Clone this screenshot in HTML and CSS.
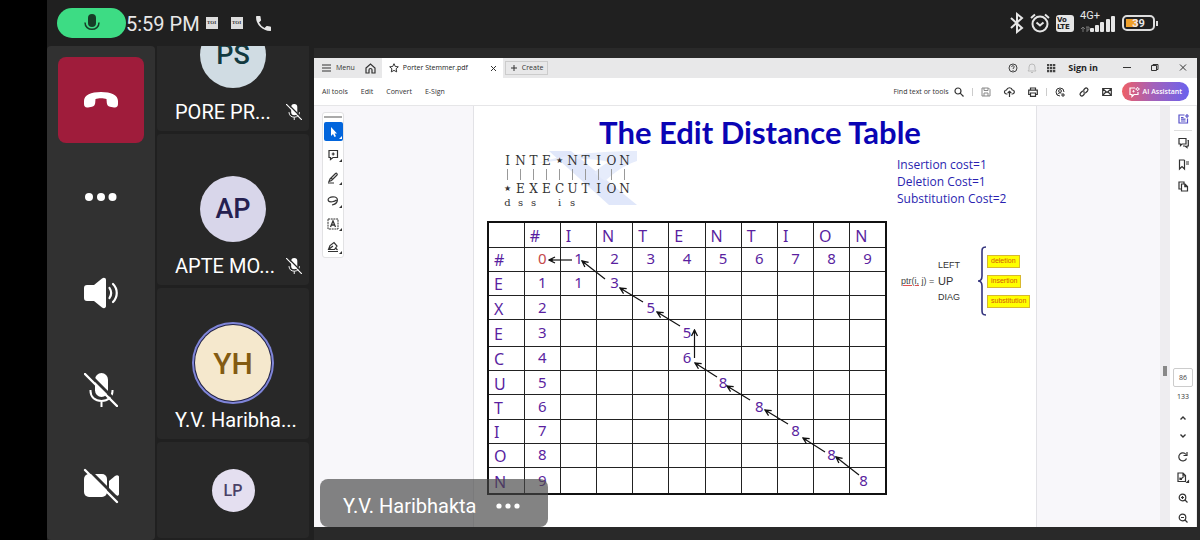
FILE: index.html
```html
<!DOCTYPE html>
<html lang="en">
<head>
<meta charset="utf-8">
<title>Meeting</title>
<link rel="stylesheet" href="styles.css">
</head>
<body>
<svg class="defs" aria-hidden="true">
  <symbol id="mic-off" viewBox="0 0 34 34"><rect x="11" y="0" width="13" height="24" rx="6.5" fill="currentColor"/><path d="M6.500 17v1c0 6 4.500 10 11 10s11-4 11-10v-1M17.500 28v6" fill="none" stroke="currentColor" stroke-width="2"/><path d="M3 -1L37 33" stroke="var(--cut)" stroke-width="3"/><path d="M1 1L33 33" stroke="currentColor" stroke-width="2.400" stroke-linecap="round"/></symbol>
  <symbol id="corner" viewBox="0 0 4 4"><path d="M4 0v4H0z" fill="currentColor"/></symbol>
  <marker id="tip" viewBox="0 0 8 8" refX="7" refY="4" markerWidth="8" markerHeight="8" markerUnits="userSpaceOnUse" orient="auto"><path d="M1 1l6 3-6 3M3 4h4" fill="none" stroke="#111" stroke-width="1.300"/></marker>
</svg>

<header class="status">
  <span class="mic-pill"><svg width="16" height="18" viewBox="0 0 16 18"><rect x="4" y="0" width="8" height="13" rx="4" fill="#173d27"/><path d="M1 8.500c0 9 14 9 14 0" fill="none" stroke="#173d27" stroke-width="1.500"/></svg></span>
  <time>5:59 PM</time>
  <span class="toi">TOI</span>
  <span class="toi">TOI</span>
  <svg class="call" width="15" height="15" viewBox="3 3 18 18"><path fill="#e6e6e6" d="M6.620 10.790a15.150 15.150 0 0 0 6.590 6.590l2.200-2.200c.28-.28.67-.36 1.020-.25 1.120.37 2.320.57 3.570.57a1 1 0 0 1 1 1V20a1 1 0 0 1-1 1A17 17 0 0 1 3 4a1 1 0 0 1 1-1h3.500a1 1 0 0 1 1 1c0 1.250.2 2.450.57 3.570.11.35.03.74-.25 1.020z"/></svg>
  <div class="phone">
    <svg width="14" height="20" viewBox="0 0 14 20"><path d="M1 5l11 10-5 4V1l5 4L1 15" fill="none" stroke="#e6e6e6" stroke-width="2"/></svg>
    <svg width="20" height="20" viewBox="0 0 20 20" fill="none" stroke="#e6e6e6" stroke-width="2"><circle cx="10" cy="11" r="7.500"/><path d="M6.500 9.500l3.500 3 3.500-3M1 5l4-3.500M19 5l-4-3.500"/></svg>
    <span class="volte">Vo<br>LTE</span>
    <span class="net"><span class="gen">4G+</span><svg width="36" height="20" viewBox="0 0 36 20"><path d="M3 19v-5m-2 2l2-2 2 2M7 14v5m-1-5h3v3H7" stroke="#777" fill="none"/><g fill="#e6e6e6"><rect x="10" y="15" width="4" height="4" rx="1"/><rect x="15" y="12" width="4" height="7" rx="1"/><rect x="20" y="9" width="4" height="10" rx="1"/><rect x="26" y="6" width="4" height="13" rx="1"/><rect x="31" y="3" width="4" height="16" rx="1"/></g></svg></span>
    <span class="battery">39</span>
  </div>
</header>

<main class="meeting">
  <nav class="controls" aria-label="Call controls">
    <button class="ctl end" aria-label="Hang up"><svg width="34" height="16" viewBox="0 0 34 16"><path fill="#fff" d="M17 0C7 0 0 3 0 9v3c0 2.500 1.500 4 4 3.500l4-.8c2-.4 3-1.700 3.200-3.700L11.500 7c3-1 8-1 11 0l.3 4c.2 2 1.200 3.300 3.200 3.700l4 .8c2.500.5 4-1 4-3.500V9c0-6-7-9-17-9z"/></svg></button>
    <button class="ctl" aria-label="More"><svg width="32" height="8" viewBox="0 0 32 8" fill="#fff"><circle cx="4" cy="4" r="4"/><circle cx="16" cy="4" r="4"/><circle cx="27.500" cy="4" r="4"/></svg></button>
    <button class="ctl" aria-label="Speaker"><svg width="34" height="30" viewBox="0 0 34 30"><path fill="#fff" d="M0 10a3 3 0 0 1 3-3h7l8-6.500c2-1.500 4-.5 4 1.500v26c0 2-2 3-4 1.500L10 23H3a3 3 0 0 1-3-3z"/><path d="M25.500 10c2 3 2 7 0 10M29 6c5 5 5 13 0 18" fill="none" stroke="#fff" stroke-width="2.200" stroke-linecap="round"/></svg></button>
    <button class="ctl" aria-label="Unmute"><svg width="34" height="34"><use href="#mic-off"/></svg></button>
    <button class="ctl" aria-label="Turn camera on"><svg width="35" height="34" viewBox="0 0 35 34"><rect y="5" width="23" height="23" rx="5" fill="#fff"/><path d="M25 12l6-5c2-1.500 4-.7 4 1v17c0 1.700-2 2.500-4 1l-6-5z" fill="#fff"/><path d="M3-1l34 34" stroke="#313131" stroke-width="3"/><path d="M1 1l32 32" stroke="#fff" stroke-width="2.400" stroke-linecap="round"/></svg></button>
  </nav>

  <section class="people" aria-label="Participants">
    <article class="person first"><div class="face"><span class="avatar ps">PS</span></div><div class="name"><span>PORE PR...</span><svg width="16" height="16"><use href="#mic-off"/></svg></div></article>
    <article class="person"><div class="face"><span class="avatar ap">AP</span></div><div class="name"><span>APTE MO...</span><svg width="16" height="16"><use href="#mic-off"/></svg></div></article>
    <article class="person"><div class="face"><span class="avatar yh">YH</span></div><div class="name"><span>Y.V. Haribha...</span></div></article>
    <article class="person last"><span class="avatar lp">LP</span></article>
  </section>

  <section class="stage">
    <div class="window">
      <div class="titlebar">
        <button class="menu"><svg width="9" height="8" viewBox="0 0 9 8"><path d="M0 1h9M0 4h9M0 7h9" stroke="#333"/></svg>Menu</button>
        <button class="home" aria-label="Home"><svg width="11" height="11" viewBox="0 0 11 11" fill="none" stroke="#333" stroke-width="1.200"><path d="M1 5l4.500-4L10 5v5H7V7a1.500 1.500 0 0 0-3 0v3H1z"/></svg></button>
        <div class="tab"><svg width="10" height="10" viewBox="0 0 10 10"><path d="M5 .7l1.300 2.800 3 .3-2.200 2 .6 3.100L5 7.400 2.300 8.900l.6-3.100-2.200-2 3-.3z" fill="none" stroke="#333"/></svg><span>Porter Stemmer.pdf</span><button class="x" aria-label="Close tab"><svg width="5" height="5" viewBox="0 0 5 5"><path d="M0 0l5 5M5 0L0 5" stroke="#333"/></svg></button></div>
        <button class="create"><svg width="6" height="6" viewBox="0 0 6 6"><path d="M0 3h6M3 0v6" stroke="#333"/></svg>Create</button>
        <div class="tray">
          <svg width="10" height="10" viewBox="0 0 10 10" fill="none" stroke="#444"><circle cx="5" cy="5" r="4"/><path d="M3.700 4c0-2 2.700-1.600 2.500 0C6 5 5 5 5 6M5 7v1"/></svg>
          <svg width="10" height="10" viewBox="0 0 10 10" fill="none" stroke="#bbb"><path d="M1 8h8L8 6.500V4a3 3 0 0 0-6 0v2.500zM4 9.500h2"/></svg>
          <svg width="10" height="10" viewBox="0 0 10 10" fill="#444"><path d="M1 1h2.300v2.300H1zM4 1h2.300v2.300H4zM7 1h2.300v2.300H7zM1 4h2.300v2.300H1zM4 4h2.300v2.300H4zM7 4h2.300v2.300H7zM1 7h2.300v2.300H1zM4 7h2.300v2.300H4zM7 7h2.300v2.300H7z"/></svg>
          <button class="signin">Sign in</button>
          <div class="winbtns">
            <button aria-label="Minimize"><svg width="10" height="10" viewBox="0 0 10 10"><path d="M1 4.500h8" stroke="#333"/></svg></button>
            <button aria-label="Restore"><svg width="10" height="10" viewBox="0 0 10 10" fill="none" stroke="#333"><path d="M1.500 2.500h5v5h-5zM3 2.500v-1h5v5H6.500"/></svg></button>
            <button aria-label="Close"><svg width="10" height="10" viewBox="0 0 10 10"><path d="M2 1.500l6 6M8 1.500l-6 6" stroke="#333"/></svg></button>
          </div>
        </div>
      </div>

      <div class="toolbar">
        <button>All tools</button><button>Edit</button><button>Convert</button><button>E-Sign</button>
        <div class="actions">
          <button class="find">Find text or tools<svg width="10" height="10" viewBox="0 0 10 10" fill="none" stroke="#333" stroke-width="1.200"><circle cx="4" cy="4" r="3"/><path d="M6.200 6.200L9.500 9.500"/></svg></button>
          <i class="sep"></i>
          <button aria-label="Save"><svg width="10" height="10" viewBox="0 0 10 10" fill="none" stroke="#888"><path d="M1 1h6.500L9 2.500V9H1zM3 1v2.500h4V1M3 9V6h4v3"/></svg></button>
          <button aria-label="Upload"><svg width="11" height="10" viewBox="0 0 11 10" fill="none" stroke="#333" stroke-width="1.200"><path d="M3.500 7H2.500a2 2 0 0 1 0-4C3.500 0 7.500 0 8.300 3a2 2 0 0 1 0 4H7.500M5.500 10V4.500M3.700 6l1.800-1.700L7.300 6"/></svg></button>
          <button aria-label="Print"><svg width="10" height="10" viewBox="0 0 10 10" fill="none" stroke="#333" stroke-width="1.200"><path d="M2.500 3V1h5v2M2 7.500H.7V3.200h8.600v4.300H8M2.500 6h5v3.300h-5z"/></svg></button>
          <i class="sep"></i>
          <button aria-label="Add person"><svg width="11" height="10" viewBox="0 0 11 10" fill="none" stroke="#333"><path d="M5 9A4 4 0 1 1 9 5M8 6v4M6 8h4"/><circle cx="5" cy="4" r="1.400"/><path d="M2.500 7.500C3 6 5 5.500 6.500 6.200"/></svg></button>
          <button aria-label="Link"><svg width="10" height="10" viewBox="0 0 10 10" fill="none" stroke="#333" stroke-width="1.200"><path d="M4.500 3L6 1.500C7.500 0 10 2.300 8.500 4L7 5.500C6 6.300 5 6 4.500 5.500M5.500 7L4 8.500C2.500 10 0 7.700 1.500 6L3 4.500C4 3.700 5 4 5.500 4.500"/></svg></button>
          <button aria-label="Mail"><svg width="10" height="10" viewBox="0 0 10 10" fill="none" stroke="#333" stroke-width="1.200"><path d="M.7 1.500h8.600v7H.7zM1 2l4 3.500L9 2M1 8.200L3.800 5M9 8.200L6.200 5"/></svg></button>
          <button class="ai"><svg width="11" height="10" viewBox="0 0 11 10" fill="none" stroke="#fff" stroke-width="1.200"><path d="M6 1H1v6.500h2V9.500l2-2h4V5"/><path d="M8.500 0l.6 1.500L10.500 2l-1.400.6-.6 1.400L8 2.600 6.500 2 8 1.500zM4.500 3v2.500M3.300 4.300h2.500" stroke-width=".8"/></svg>AI Assistant</button>
        </div>
      </div>

      <div class="workspace">
        <div class="gutter left">
          <div class="toolbox">
            <i class="grip"></i>
            <button class="on" aria-label="Select"><svg width="14" height="14" viewBox="0 0 14 14"><path d="M5 2v9l2-2 1.500 3L10 11.300 8.600 8.500H11z" fill="#fff"/></svg><svg class="more" width="3" height="3"><use href="#corner"/></svg></button>
            <button aria-label="Comment"><svg width="12" height="12" viewBox="0 0 12 12" fill="none" stroke="#333" stroke-width="1.200"><path d="M2 1.500h8.500v7H6l-2.500 2v-2H2zM6.200 3.500v3M4.700 5h3"/></svg><svg class="more" width="3" height="3"><use href="#corner"/></svg></button>
            <button aria-label="Draw"><svg width="12" height="12" viewBox="0 0 12 12" fill="none" stroke="#333" stroke-width="1.200"><path d="M3 7l5.500-5.500c1-.8 2.300.7 1.500 1.500L4.500 8.500 2 9.500zM4 5.800l2 2M1 11h6"/></svg><svg class="more" width="3" height="3"><use href="#corner"/></svg></button>
            <button aria-label="Lasso"><svg width="12" height="12" viewBox="0 0 12 12" fill="none" stroke="#333" stroke-width="1.200"><path d="M5 10C11 9 12 3 8 2 3 1 0 4 1.500 6c1.500 1.500 6 .8 8-1"/></svg><svg class="more" width="3" height="3"><use href="#corner"/></svg></button>
            <button aria-label="Text"><svg width="12" height="12" viewBox="0 0 12 12" fill="none" stroke="#333"><path d="M1 1h10v10H1z" stroke-dasharray="2 .7"/><path d="M3.500 9L6 3l2.500 6M4.500 7h3" stroke-width="1.300"/></svg><svg class="more" width="3" height="3"><use href="#corner"/></svg></button>
            <button aria-label="Sign"><svg width="12" height="12" viewBox="0 0 12 12" fill="none" stroke="#333" stroke-width="1.200"><path d="M1.500 8.500L3 4.500l4-3 3 3.500-2.500 3.500zM1.500 8.500L6 5M1 10.500h10M8.500 7l2 2"/></svg><svg class="more" width="3" height="3"><use href="#corner"/></svg></button>
          </div>
        </div>

        <article class="page">
          <h1>The Edit Distance Table</h1>
          <div class="align">
            <svg class="mark" viewBox="0 0 100 54"><path d="M10 0h22l66 54H70z" fill="#e0e7fa"/><path d="M0 12C20 4 60 0 98 0v10C85 14 75 22 66 30L55 22c5-5 9-8 15-11C50 5 20 9 0 12z" fill="#e6ecfb"/></svg>
            <div class="seq"><b>I</b><b>N</b><b>T</b><b>E</b><b class="star">★</b><b>N</b><b>T</b><b>I</b><b>O</b><b>N</b></div>
            <div class="seq bars"><i></i><i></i><i></i><i></i><i></i><i></i><i></i><i></i><i></i><i></i></div>
            <div class="seq"><b class="star">★</b><b>E</b><b>X</b><b>E</b><b>C</b><b>U</b><b>T</b><b>I</b><b>O</b><b>N</b></div>
            <div class="seq ops"><b>d</b><b>s</b><b>s</b><b></b><b>i</b><b>s</b></div>
          </div>
          <p class="costs">Insertion cost=1<br>Deletion Cost=1<br>Substitution Cost=2</p>

          <div class="matrix">
            <table>
              <thead><tr><td></td><th>#</th><th>I</th><th>N</th><th>T</th><th>E</th><th>N</th><th>T</th><th>I</th><th>O</th><th>N</th></tr></thead>
              <tbody>
              <tr><th>#</th><td class="zero">0</td><td>1</td><td>2</td><td>3</td><td>4</td><td>5</td><td>6</td><td>7</td><td>8</td><td>9</td></tr>
              <tr><th>E</th><td>1</td><td>1</td><td>3</td><td></td><td></td><td></td><td></td><td></td><td></td><td></td></tr>
              <tr><th>X</th><td>2</td><td></td><td></td><td>5</td><td></td><td></td><td></td><td></td><td></td><td></td></tr>
              <tr class="tall"><th>E</th><td>3</td><td></td><td></td><td></td><td>5</td><td></td><td></td><td></td><td></td><td></td></tr>
              <tr><th>C</th><td>4</td><td></td><td></td><td></td><td>6</td><td></td><td></td><td></td><td></td><td></td></tr>
              <tr><th>U</th><td>5</td><td></td><td></td><td></td><td></td><td>8</td><td></td><td></td><td></td><td></td></tr>
              <tr><th>T</th><td>6</td><td></td><td></td><td></td><td></td><td></td><td>8</td><td></td><td></td><td></td></tr>
              <tr><th>I</th><td>7</td><td></td><td></td><td></td><td></td><td></td><td></td><td>8</td><td></td><td></td></tr>
              <tr><th>O</th><td>8</td><td></td><td></td><td></td><td></td><td></td><td></td><td></td><td>8</td><td></td></tr>
              <tr class="tall"><th>N</th><td>9</td><td></td><td></td><td></td><td></td><td></td><td></td><td></td><td></td><td class="end-cell">8</td></tr>
              </tbody>
            </table>
            <svg class="arrows" viewBox="0 0 400 274" preserveAspectRatio="none"><g stroke="#111" stroke-width="1.200" fill="none">
              <path marker-end="url(#tip)" d="M85 39H62"/><path marker-end="url(#tip)" d="M118 58L95 40"/><path marker-end="url(#tip)" d="M156 81L133 67"/><path marker-end="url(#tip)" d="M193 105L170 91"/><path marker-end="url(#tip)" d="M207.500 137V109"/><path marker-end="url(#tip)" d="M230 156L208 142"/><path marker-end="url(#tip)" d="M263 179L240 165"/><path marker-end="url(#tip)" d="M301 203L278 189"/><path marker-end="url(#tip)" d="M338 231L316 217"/><path marker-end="url(#tip)" d="M372 254L349 236"/>
            </g></svg>
          </div>

          <div class="ptr">
            <span class="fn"><u>ptr(i,</u> j) =</span>
            <ul class="dirs"><li>LEFT</li><li class="up">UP</li><li>DIAG</li></ul>
            <svg class="brace" width="10" height="70" viewBox="0 0 10 70"><path d="M9 1C5 1 5 3 5 6v24c0 3-1 5-4 5 3 0 4 2 4 5v24c0 3 0 5 4 5" fill="none" stroke="#33337d" stroke-width="1.600"/></svg>
            <ul class="ops-list"><li>deletion</li><li>insertion</li><li>substitution</li></ul>
          </div>
        </article>

        <div class="gutter right"></div>
        <div class="scroll"><i></i></div>
        <aside class="rail">
          <button class="violet" aria-label="Assistant"><svg width="11" height="10" viewBox="0 0 11 10" fill="none" stroke="#5650c8" stroke-width="1.200"><path d="M6.500 1H1v8h8.500V4.500M3 3.500h2.500M3 5.200h4.500M3 7h4.500"/><path d="M9 0v4M7 2h4"/></svg></button>
          <i class="rule"></i>
          <button aria-label="Comments"><svg width="11" height="11" viewBox="0 0 11 11" fill="none" stroke="#333" stroke-width="1.200"><path d="M1 1.500h7v5.500H4L2.500 8.500V7H1zM9.500 3.500h.8V9H9v1.500L7 9H5"/></svg></button>
          <button aria-label="Bookmarks"><svg width="11" height="11" viewBox="0 0 11 11" fill="none" stroke="#333" stroke-width="1.200"><path d="M6.500 1H1.500v9L4 7.500 6.500 10V1M8 3h3M8 5h3"/></svg></button>
          <button aria-label="Pages"><svg width="11" height="11" viewBox="0 0 11 11" fill="none" stroke="#333" stroke-width="1.200"><path d="M3 8H1V1h5v1.500M3.500 3H7l2.500 2.500V10h-6zM6.800 3v2.700h2.700"/></svg></button>
          <div class="pager">
            <input aria-label="Page" value="86">
            <span>133</span>
            <button aria-label="Previous page"><svg width="6" height="4" viewBox="0 0 6 4"><path d="M.5 3.500L3 1l2.500 2.500" fill="none" stroke="#333" stroke-width="1.400"/></svg></button>
            <button aria-label="Next page"><svg width="6" height="4" viewBox="0 0 6 4"><path d="M.5.5L3 3 5.500.5" fill="none" stroke="#333" stroke-width="1.400"/></svg></button>
            <button aria-label="Rotate"><svg width="10" height="10" viewBox="0 0 10 10" fill="none" stroke="#333" stroke-width="1.200"><path d="M8.500 6.500A4 4 0 1 1 8 2.500M9 0v3.500H5.500"/></svg></button>
            <button aria-label="Fit page"><svg width="12" height="11" viewBox="0 0 12 11" fill="none" stroke="#333" stroke-width="1.200"><path d="M1 1h5l2.500 2.500V9.500H1zM6 1v3h2.500M3 7.500L6.500 5M3 5.500v2h2"/><path d="M11.500 9v1.500H10z"/></svg></button>
            <button aria-label="Zoom in"><svg width="10" height="10" viewBox="0 0 10 10" fill="none" stroke="#333" stroke-width="1.200"><circle cx="4.500" cy="4.500" r="3.300"/><path d="M7 7l2.500 2.500M3 4.500h3M4.500 3v3"/></svg></button>
            <button aria-label="Zoom out"><svg width="10" height="10" viewBox="0 0 10 10" fill="none" stroke="#333" stroke-width="1.200"><circle cx="4.500" cy="4.500" r="3.300"/><path d="M7 7l2.500 2.500M3 4.500h3"/></svg></button>
          </div>
        </aside>
      </div>
    </div>
    <div class="presenter">Y.V. Haribhakta<svg width="24" height="6" viewBox="0 0 24 6" fill="#fff"><circle cx="3" cy="3" r="2.600"/><circle cx="12" cy="3" r="2.600"/><circle cx="21" cy="3" r="2.600"/></svg></div>
  </section>
</main>
</body>
</html>
```
FILE: styles.css
```css
* { box-sizing: border-box; }
html { background: #000; }
body {
  margin: 0 0 0 47px;
  height: 100vh;
  min-height: 540px;
  display: flex;
  flex-direction: column;
  overflow: hidden;
  background: #202020;
  color: #fff;
  font-family: Roboto, sans-serif;
}
button { border: 0; padding: 0; margin: 0; background: none; font: inherit; color: inherit; }
svg { display: block; overflow: visible; flex: none; }
ul { list-style: none; margin: 0; padding: 0; }
.defs { position: absolute; width: 0; height: 0; }

/* Phone status bar */
.status { flex: none; height: 46px; display: flex; align-items: center; padding: 0 45px 0 10px; color: #e8e8e8; }
.mic-pill { width: 69px; height: 30px; border-radius: 15px; background: #3ddc84; display: grid; place-items: center; }
.status time { font-size: 20px; line-height: 24px; padding: 2px 6px 0 0; }
.toi { width: 12px; height: 12px; margin-right: 13px; background: #ddd; color: #333; font: bold 5px/12px "Liberation Serif", serif; text-align: center; }
.phone { margin-left: auto; display: flex; align-items: center; gap: 6px; }
.volte { width: 18px; height: 17px; border-radius: 3px; background: #e6e6e6; color: #222; font: bold 7px/7px "DejaVu Sans", sans-serif; padding: 2px 1px; }
.net { position: relative; }
.gen { position: absolute; left: 0; top: -3px; font-size: 11px; line-height: 12px; }
.battery { position: relative; width: 33px; height: 16px; border: 2px solid #ddd; border-radius: 5px; background: linear-gradient(90deg, #eea02c 11px, transparent 11px) 2px 2px / 100% 8px no-repeat; font: bold 11px/13px Roboto, sans-serif; text-align: center; }
.battery::after { content: ""; position: absolute; right: -5px; top: 4px; width: 2px; height: 5px; background: #ddd; }

.meeting { flex: 1; min-height: 0; display: flex; }

.controls { --cut: #313131; width: 108px; flex: none; display: flex; flex-direction: column; align-items: center; justify-content: space-between; padding: 11px 0; background: #313131; border-radius: 4px; }
.ctl { width: 86px; height: 86px; border-radius: 8px; display: grid; place-items: center; }
.end { background: #9f1c3b; }

.people { --cut: #282828; width: 152px; flex: none; margin-left: 2px; display: flex; flex-direction: column; gap: 3px; overflow: hidden; }
.person { flex: none; height: 151px; border-radius: 4px; background: #282828; padding-top: 42px; }
.person.first { margin-top: -66px; }
.person.last { height: 96px; padding: 0; display: grid; place-items: center; }
.face { height: 66px; margin-bottom: 12px; display: grid; place-items: center; align-content: center; }
.avatar { width: 66px; height: 66px; border-radius: 50%; display: grid; place-items: center; font-size: 27px; font-weight: 500; }
.ps { background: #d0dce3; color: #12393f; }
.ap { background: #d8d6ea; color: #252050; }
.yh { width: 76px; height: 76px; background: #f5e8cd; color: #835b12; font-size: 30px; box-shadow: 0 0 0 1px #222244, 0 0 0 3px #7f85d8; }
.lp { width: 43px; height: 43px; background: #e4dff0; color: #4a4166; font-size: 16px; }
.name { display: flex; align-items: center; justify-content: space-between; padding: 0 7px 0 18px; font-size: 20px; line-height: 24px; white-space: nowrap; }

.stage { position: relative; flex: 1; min-width: 0; margin-left: 5px; padding: 12px 3px 13px 0; display: flex; background: linear-gradient(#202020 2px, #292929 2px); }
.window { flex: 1; min-width: 0; display: flex; flex-direction: column; background: #fff; color: #333; font: 7px/10px "Open Sans", sans-serif; }

.titlebar { flex: none; height: 20px; background: #e8e8e9; display: flex; align-items: stretch; }
.titlebar button, .toolbar button { display: flex; align-items: center; }
.menu { gap: 5px; padding-left: 8px; }
.titlebar .menu { padding-left: 8px; }
.titlebar .home { padding: 0 6px 0 10px; }
.tab { width: 121px; background: #fff; display: flex; align-items: center; gap: 4px; padding: 0 7px; color: #222; }
.tab .x { margin-left: auto; }
.titlebar .create { gap: 5px; align-self: center; height: 14px; margin-left: 2px; border: 1px solid #ccc; padding: 0 4px 0 5px; }
.tray { margin-left: auto; display: flex; align-items: center; gap: 9px; padding-right: 9px; }
.titlebar .signin { font-size: 9px; font-weight: 700; margin: 0 15px 0 3px; color: #222; }
.winbtns { display: flex; gap: 18px; }

.toolbar { flex: none; height: 28px; display: flex; align-items: center; gap: 13px; padding: 0 8px; border-bottom: 1px solid #e6e6e8; white-space: nowrap; }
.actions { margin-left: auto; display: flex; align-items: center; gap: 13px; }
.find { gap: 5px; }
.sep { width: 1px; height: 8px; background: #ccc; margin: 0 -5px; }
.toolbar .ai { height: 19px; border-radius: 10px; gap: 3px; padding: 0 7px; margin-left: -3px; color: #fff; font-weight: 600; background: linear-gradient(90deg, #ee5f66, #a561b8 45%, #6a62ee); }

.workspace { flex: 1; min-height: 0; display: flex; overflow: hidden; }
.gutter { background: #f8f7fa; }
.left { flex: 160 1 160px; border-right: 1px solid #e2e2e6; padding: 6px 8px; }
.right { flex: 124 1 124px; border-left: 1px solid #e2e2e6; }
.toolbox { width: 22px; display: flex; flex-direction: column; align-items: center; gap: 4px; padding: 3px 0 1px; background: #fff; border: 1px solid #e2e2e4; border-radius: 3px; }
.toolbox .grip { width: 18px; height: 2px; background: #aaa; }
.toolbox button { position: relative; width: 19px; height: 19px; display: grid; place-items: center; }
.toolbox .on { background: #0265dc; border-radius: 2px; color: #fff; }
.more { position: absolute; right: 1px; bottom: 2px; }

.page { flex: 0 0 562px; background: #fff; padding: 9px 0 0 13px; display: grid; grid-template-columns: 400px 1fr; grid-template-rows: 35px 71px auto; column-gap: 10px; align-content: start; }
.page h1 { grid-column: 1 / -1; margin: 0 3px 0 0; text-align: center; font: 700 31px/35px Lato, sans-serif; color: #0a04b4; white-space: nowrap; }
.align { position: relative; padding: 4px 0 0 14px; color: #333; }
.mark { position: absolute; left: 52px; top: 1px; width: 100px; height: 54px; }
.seq { position: relative; display: grid; grid-template-columns: repeat(10, 13px); justify-items: center; height: 14px; font: 12px/14px "DejaVu Serif", serif; }
.seq b { font-weight: 400; }
.seq .star { font: 8px/14px "DejaVu Sans", sans-serif; }
.bars i { width: 1px; height: 11px; margin-top: 1px; background: #999; }
.ops { font-size: 10px; }
.costs { margin: 6px 0 0; color: #2a1fb0; font: 12px/17px "Open Sans", sans-serif; white-space: nowrap; }

.matrix { position: relative; }
table { width: 100%; height: 274px; table-layout: fixed; border-collapse: collapse; border: 2px solid #111; background: #fff; color: #5a1fa0; font: 15px/20px "Noto Sans", sans-serif; }
tr { height: 24px; }
thead tr { height: 25px; }
.tall { height: 26px; }
th, td { border: 1px solid #222; padding: 0; text-align: center; font-weight: 400; }
th { font-size: 16px; text-align: left; padding: 2px 0 0 5px; }
td { padding: 0 0 2px; }
.zero { color: #c4494b; }
.end-cell { padding-right: 8px; }
.arrows { position: absolute; inset: 0; width: 100%; height: 100%; }

.ptr { display: flex; align-items: center; align-self: start; height: 70px; margin-top: 25px; padding-left: 4px; color: #333; font: 9px/16px "Liberation Sans", sans-serif; white-space: nowrap; }
.fn { width: 37px; color: #444; }
.fn u { text-decoration-color: #e05050; }
.dirs { width: 39px; }
.up { font-size: 11px; }
.ops-list { display: grid; justify-items: start; gap: 7px; }
.ops-list li { height: 13px; padding: 0 3px; background: #ff0; border: 1px solid #d8b830; color: #d2580c; font-size: 7px; line-height: 10px; }

.scroll { flex: none; width: 10px; background: #eeedf0; padding: 260px 3px 0; }
.scroll i { display: block; width: 4px; height: 10px; background: #888; }
.rail { flex: none; width: 27px; display: flex; flex-direction: column; align-items: center; gap: 11px; padding: 8px 0 4px; border-right: 1px solid #eee; }
.rule { width: 18px; height: 1px; margin: -5px 0; background: #ddd; }
.pager { margin-top: auto; display: flex; flex-direction: column; align-items: center; gap: 10px; }
.pager input { width: 20px; height: 19px; margin-bottom: -5px; padding: 0; border: 1px solid #ccc; border-radius: 2px; background: #fff; color: #444; font: inherit; text-align: center; }
.pager span { margin-bottom: 4px; }
.pager button:nth-of-type(1), .pager button:nth-of-type(2) { margin-bottom: 4px; }

.presenter { position: absolute; left: 6px; bottom: 13px; height: 48px; padding: 5px 28px 0 23px; display: flex; align-items: center; gap: 20px; border-radius: 8px; background: rgba(70, 70, 70, 0.67); font-size: 20px; }
```
